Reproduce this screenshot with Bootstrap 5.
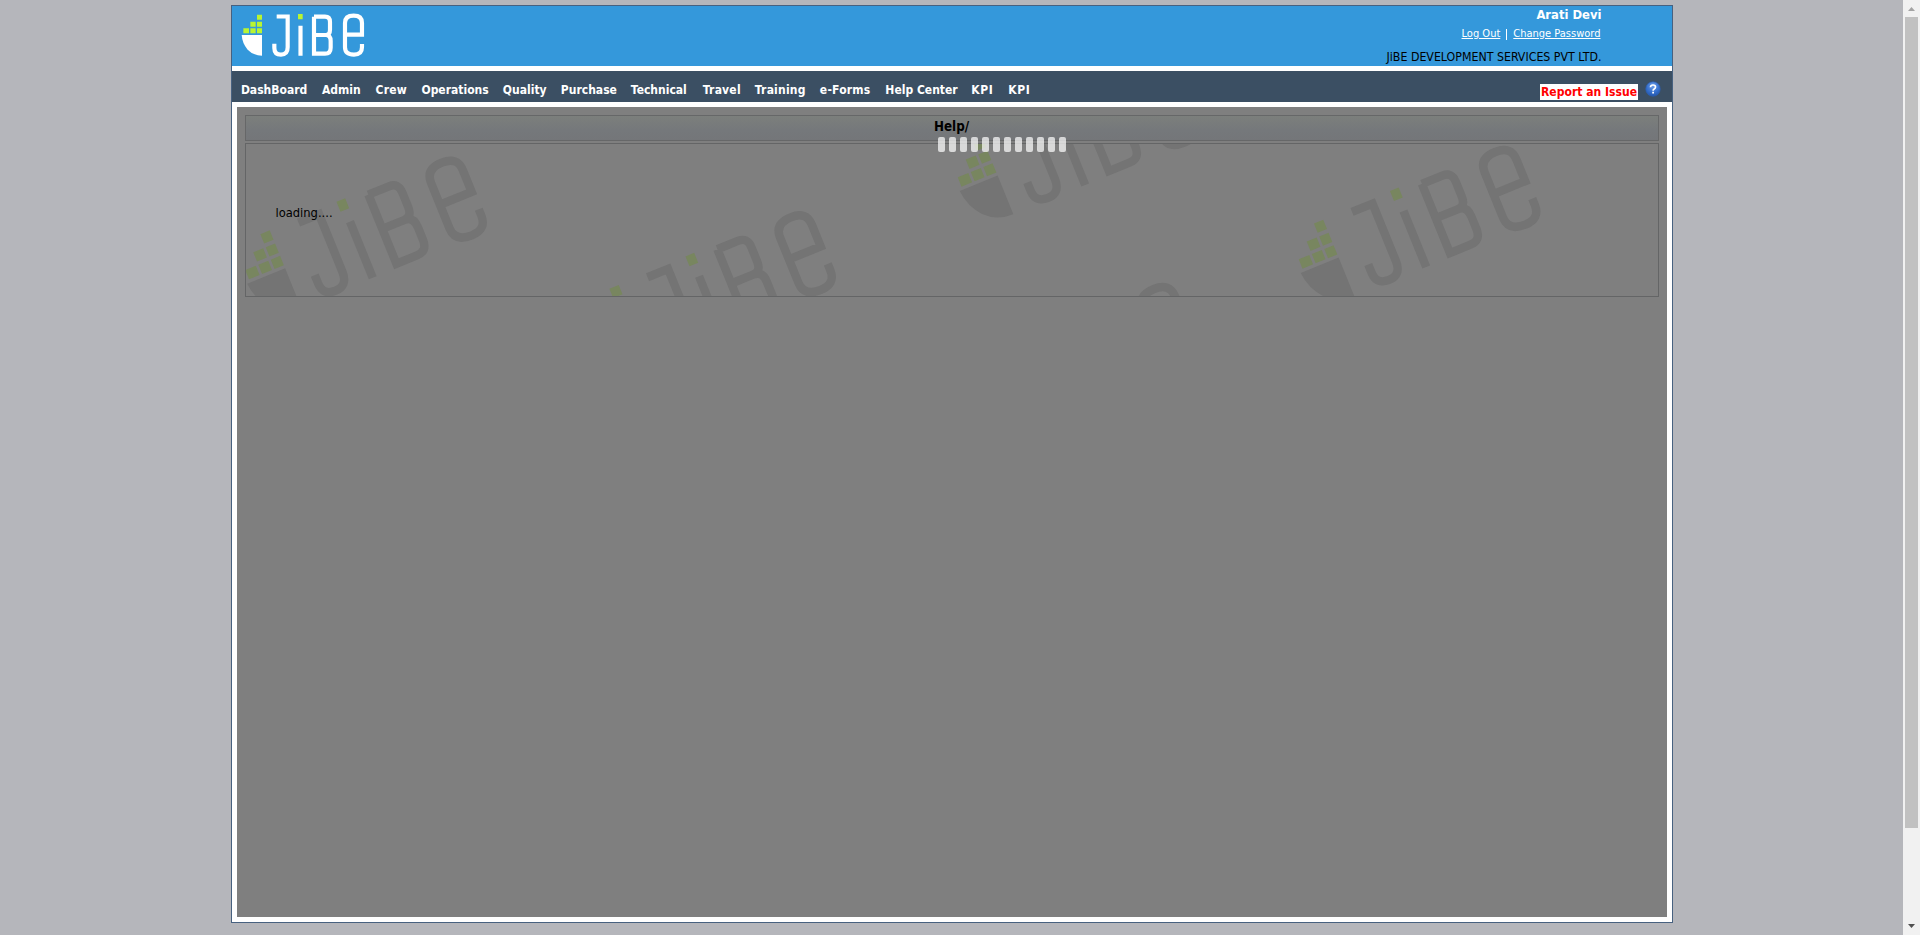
<!DOCTYPE html>
<html lang="en">
<head>
<meta charset="utf-8">
<title>JiBE Help</title>
<link href="https://cdn.jsdelivr.net/npm/bootstrap@5.3.0/dist/css/bootstrap.min.css" rel="stylesheet">
<style>
body{background:#b5b6bb;font-family:Tahoma,"DejaVu Sans Condensed",sans-serif;font-size:12px;line-height:16px;color:#000;height:935px;overflow:hidden}
.page{padding-right:17px}
.shell{width:1442px;height:918px;margin:5px auto 0;border:1px solid #476180;background:#fff}
.topbar{height:60px;background:#3498db;padding:7px 70px 0 9px}
.brand{width:124px;height:44.67px}
.user{font-size:12.9px;line-height:16px;margin-top:-6px}
.links{font-size:11px;line-height:16px;margin:3px 1px 0 0;color:#fff}
.links a{color:#fff;text-decoration:underline;text-underline-offset:1px}
.links i{width:1px;height:11px;background:#fff;margin:0 6px}
.company{font-size:12.27px;line-height:16px;margin-top:7px}
.menubar{height:31px;margin-top:5px;background:#3b4f63;padding:10px 11px 0 9.4px}
.menu{display:grid;grid-template-columns:81px 53.7px 45.9px 81.4px 58px 70px 72px 52px 65px 65.5px 86px 37px 60px;padding-top:1px}
.menu a,.issue{color:#fff;font-weight:700;text-decoration:none;white-space:nowrap;line-height:16px}
.menu .k{letter-spacing:.5px}
.menu .w{letter-spacing:.2px}
.issue{background:#fff;color:#f00;height:16px;margin:3px 7px 0 0;padding-left:1.5px;width:98px;font-size:12.05px;line-height:17px}
.stage{height:810px;margin:5px 5px 0;background:#7f7f7f;padding:8px}
.titlebox{height:26px;border:1px solid #666768;background:linear-gradient(#7c7f7c,#75787b 60%,#747679);font-size:13.3px;font-weight:700;line-height:21px}
.panel{height:154px;margin-top:2px;border:1px solid #646566;overflow:hidden}
.panel svg{left:0;top:0}
.panel p{font-size:12.8px;padding:61px 0 0 30px}
.pills{left:938px;top:137px;gap:4px}
.pills i{width:7px;height:15px;border-radius:2px;background:rgba(255,255,255,.7)}
.sbar{right:0;top:0;width:17px;height:935px;background:#f1f1f1;padding:7px 0}
.sbar i{width:13px;height:811px;background:#c1c1c1;margin-top:6px}
</style>
</head>
<body class="m-0 position-relative">
<svg width="0" height="0" class="position-absolute" aria-hidden="true">
<defs>
<g id="leaves"><path d="M96 45h15v15H96zM76 66h16v15H76zM96 66h15v15H96zM55 86h17v15H55zM76 86h16v15H76zM96 86h15v15H96zM219 43h14v16h-14z"/></g>
<g id="strokes"><path d="M50 106H111V168Q85 168 68 150Q52 132 50 106Z" stroke="none" fill="currentColor"/>
<path d="M155 50.5H188V143Q188 165 168 165Q148 165 148 145V132M226.500 78V168M267 51V162H300Q317 162 317 144V124Q317 106 302 106H267M267 51H300Q315 51 315 67V90Q315 106 302 106M411 133V143Q411 165 387 165Q360 165 360 143V70Q360 48 386 48Q411 48 411 70V105H360" fill="none" stroke="currentColor" stroke-width="12.500"/></g>
<g id="stamp"><g transform="rotate(-22.1) scale(.672) translate(-104 -93)"><use href="#leaves" fill="#78865f"/><use href="#strokes"/></g></g>
<radialGradient id="ball" cx=".5" cy=".3" r=".7"><stop offset="0" stop-color="#6f9fe8"/><stop offset=".6" stop-color="#3670cd"/><stop offset="1" stop-color="#2457ab"/></radialGradient>
</defs></svg>
<div class="page">
<main class="shell">
<header class="topbar d-flex justify-content-between">
<svg class="brand" viewBox="48 40 372 134" color="#fff"><use href="#leaves" fill="#b9f532"/><use href="#strokes"/></svg>
<div class="d-flex flex-column align-items-end">
<div class="user fw-bold text-white">Arati Devi</div>
<div class="links d-flex align-items-center"><a href="#">Log Out</a><i></i><a href="#">Change Password</a></div>
<div class="company">JiBE DEVELOPMENT SERVICES PVT LTD.</div>
</div>
</header>
<nav class="menubar d-flex">
<div class="menu me-auto"><a href="#">DashBoard</a><a href="#">Admin</a><a href="#" class="w">Crew</a><a href="#">Operations</a><a href="#">Quality</a><a href="#">Purchase</a><a href="#">Technical</a><a href="#" class="w">Travel</a><a href="#" class="w">Training</a><a href="#" class="w">e-Forms</a><a href="#">Help Center</a><a href="#" class="k">KPI</a><a href="#" class="k">KPI</a></div>
<a href="#" class="issue">Report an Issue</a>
<svg width="16" height="16" viewBox="0 0 16 16"><circle cx="8" cy="8" r="7.300" fill="url(#ball)" stroke="#2c5eb0" stroke-width=".6"/><path d="M5.500 6.200Q5.600 4 8 4Q10.500 4 10.500 6Q10.500 7.200 9.200 7.900Q8.100 8.500 8.100 9.700" fill="none" stroke="#fff" stroke-width="1.700"/><path d="M7.200 10.800h1.800v1.700H7.200z" fill="#fff"/></svg>
</nav>
<section class="stage">
<div class="titlebox text-center">Help/</div>
<div class="panel position-relative">
<svg class="position-absolute" width="1412" height="152" viewBox="246 144 1412 152" color="#747474">
<use href="#stamp" x="277.500" y="262"/><use href="#stamp" x="626.500" y="316.600"/><use href="#stamp" x="990" y="169.300"/><use href="#stamp" x="1331" y="251.300"/><use href="#stamp" x="989.700" y="388.300"/>
</svg>
<p class="position-relative m-0">loading....</p>
</div>
</section>
</main>
</div>
<div class="pills position-absolute d-flex"><i></i><i></i><i></i><i></i><i></i><i></i><i></i><i></i><i></i><i></i><i></i><i></i></div>
<div class="sbar position-absolute d-flex flex-column align-items-center">
<svg width="7" height="4" viewBox="0 0 7 4"><path d="M0 4L3.500 0L7 4z" fill="#a3a3a3"/></svg><i></i>
<svg class="mt-auto" width="7" height="4" viewBox="0 0 7 4"><path d="M0 0L3.500 4L7 0z" fill="#505050"/></svg>
</div>
<script src="https://cdn.jsdelivr.net/npm/bootstrap@5.3.0/dist/js/bootstrap.bundle.min.js"></script>
</body>
</html>
